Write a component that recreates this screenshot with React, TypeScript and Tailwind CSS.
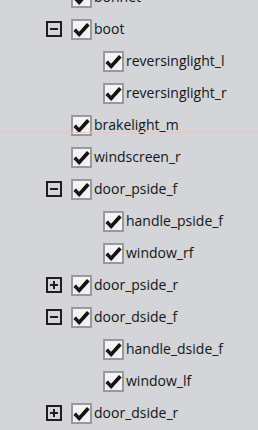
import React from "react";

type Row = { label: string; level: number; exp?: "minus" | "plus" };

const rows: Row[] = [
  { label: "bonnet", level: 0 },
  { label: "boot", level: 0, exp: "minus" },
  { label: "reversinglight_l", level: 1 },
  { label: "reversinglight_r", level: 1 },
  { label: "brakelight_m", level: 0 },
  { label: "windscreen_r", level: 0 },
  { label: "door_pside_f", level: 0, exp: "minus" },
  { label: "handle_pside_f", level: 1 },
  { label: "window_rf", level: 1 },
  { label: "door_pside_r", level: 0, exp: "plus" },
  { label: "door_dside_f", level: 0, exp: "minus" },
  { label: "handle_dside_f", level: 1 },
  { label: "window_lf", level: 1 },
  { label: "door_dside_r", level: 0, exp: "plus" },
];

function Expander({ kind }: { kind: "minus" | "plus" }) {
  return (
    <div className="relative w-[16px] h-[16px] border-2 border-[#1e1e1e] box-border">
      <div className="absolute left-[2px] right-[2px] top-[5px] h-[2px] bg-[#1e1e1e]" />
      {kind === "plus" && (
        <div className="absolute top-[2px] bottom-[2px] left-[5px] w-[2px] bg-[#1e1e1e]" />
      )}
    </div>
  );
}

function Check() {
  return (
    <div className="w-[21px] h-[21px] border-2 border-[#9a9a9a] bg-[#f3f3f3] box-border flex items-center justify-center shrink-0">
      <svg width="17" height="17" viewBox="0 0 16 16">
        <path d="M1.6 8.2 L5.8 12.6 L14.4 3.0" fill="none" stroke="#111" strokeWidth="3.4" strokeLinecap="butt" strokeLinejoin="miter" />
      </svg>
    </div>
  );
}

export default function App() {
  return (
    <div className="relative w-[258px] h-[430px] overflow-hidden bg-[#d3d5d8]" style={{ fontFamily: '"Open Sans", "Noto Sans", sans-serif' }}>
      <div className="mt-[-19px] flex flex-col">
        {rows.map((r, i) => (
          <div key={i} className="h-[32px] flex items-center" style={{ paddingLeft: 46 + r.level * 32 }}>
            <div className="w-[25px] shrink-0 flex items-center">
              {r.exp && <Expander kind={r.exp} />}
            </div>
            <Check />
            <span className="ml-[2px] text-[14px] text-[#141414] leading-none whitespace-nowrap">{r.label}</span>
          </div>
        ))}
      </div>
      <div className="absolute left-0 right-0 top-[132px] h-px bg-[#e2c6c6]" />
    </div>
  );
}
